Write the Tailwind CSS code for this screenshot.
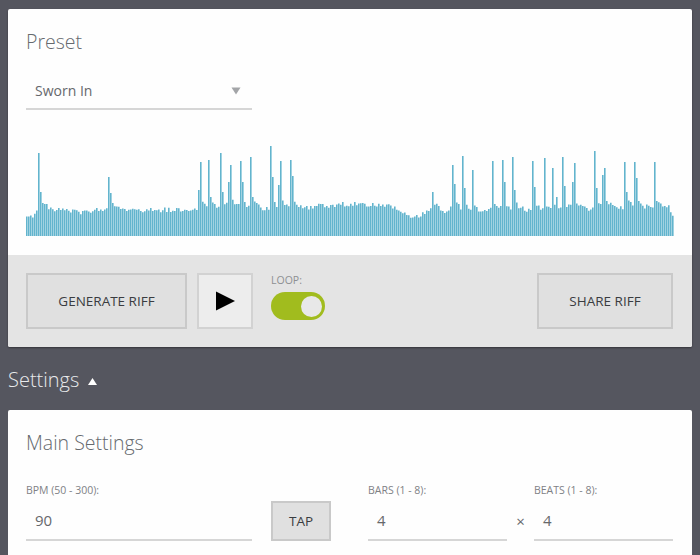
<!doctype html>
<html>
<head>
<meta charset="utf-8">
<script src="https://cdn.jsdelivr.net/npm/@tailwindcss/browser@4"></script>
</head>
<body class="m-0 h-[555px] w-[700px] overflow-hidden bg-[#55565f] font-['Open_Sans',sans-serif]">
<div class="px-2 pt-[9px]">
  <section class="rounded-[2px] bg-[#fefefe] shadow-[0_1px_2px_rgba(0,0,0,0.4)]">
    <div class="px-[18px] pt-[19px] h-[246px]">
      <h2 class="text-[19.5px] leading-[27px] font-light text-[#666a6e]">Preset</h2>
      <div class="mt-[16px] flex h-[39px] w-[226px] items-center justify-between border-b-2 border-[#d6d6d6] pl-[9px] pr-[11px] pt-[2px] text-[14px] text-[#66686c]">
        <span>Sworn In</span>
        <svg width="10" height="8" viewBox="0 0 10 8"><path d="M0.5 0.5H9.5L5 7.5Z" fill="#a3a5a8"/></svg>
      </div>
      <svg id="wave" class="mt-[36px] block" width="648" height="92" viewBox="26 146 648 92"><path id="wp" fill="#62b4cd" d=""/></svg>
    </div>
    <div class="flex h-[92px] items-start rounded-b-[2px] bg-[#e4e4e4] pl-[18px] pr-[19px] pt-[18px]">
      <button class="h-[56px] w-[161px] border-2 border-[#c9c9c9] bg-[#e0e0e0] text-[13.5px] font-normal text-[#3a3c40]">GENERATE RIFF</button>
      <button class="ml-[10px] flex h-[56px] w-[56px] items-center justify-center border-2 border-[#d2d2d2] bg-[#ededed]">
        <svg width="19" height="20" viewBox="0 0 19 20"><path d="M0 0.5L19 10L0 19.5Z" fill="#000"/></svg>
      </button>
      <div class="ml-[18px] flex w-[54px] flex-col">
        <span class="text-[10.5px] leading-[14px] text-[#8d8f92]">LOOP:</span>
        <span class="mt-[5px] flex h-[28px] w-[54px] items-center justify-end rounded-full bg-[#a1bc1e] pr-[3px]">
          <span class="h-[21px] w-[21px] rounded-full bg-[#e8e8e8]"></span>
        </span>
      </div>
      <button class="ml-auto h-[56px] w-[136px] border-2 border-[#c9c9c9] bg-[#e0e0e0] text-[13.5px] font-normal text-[#3a3c40]">SHARE RIFF</button>
    </div>
  </section>
  <div class="mt-[19px] flex h-[28px] items-center gap-[9px] text-[#e9eaec]">
    <span class="text-[20px] leading-[28px] font-light">Settings</span>
    <svg width="9" height="7" viewBox="0 0 9 7" class="mt-[3px]"><path d="M4.5 0L9 7H0Z" fill="#fff"/></svg>
  </div>
  <section class="mt-[16px] h-[160px] rounded-[2px] bg-[#fefefe] px-[18px] pt-[19px]">
    <h2 class="text-[19.5px] leading-[27px] font-light text-[#666a6e]">Main Settings</h2>
    <div class="mt-[27px] flex items-start">
      <div class="w-[226px]">
        <div class="text-[10.5px] leading-[14px] text-[#7f8185]">BPM (50 - 300):</div>
        <div class="flex h-[44px] items-center border-b-2 border-[#d6d6d6] pl-[9px] pt-[4px] text-[15px] text-[#66686c]">90</div>
      </div>
      <button class="ml-[19px] mt-[18px] h-[40px] w-[60px] border-2 border-[#c9c9c9] bg-[#e0e0e0] text-[13.5px] text-[#3a3c40]">TAP</button>
      <div class="ml-[37px] w-[139px]">
        <div class="text-[10.5px] leading-[14px] text-[#7f8185]">BARS (1 - 8):</div>
        <div class="flex h-[44px] items-center border-b-2 border-[#d6d6d6] pl-[9px] pt-[4px] text-[15px] text-[#66686c]">4</div>
      </div>
      <div class="flex h-[76px] w-[27px] items-center justify-center text-[15px] text-[#66686c]">×</div>
      <div class="w-[139px]">
        <div class="text-[10.5px] leading-[14px] text-[#7f8185]">BEATS (1 - 8):</div>
        <div class="flex h-[44px] items-center border-b-2 border-[#d6d6d6] pl-[9px] pt-[4px] text-[15px] text-[#66686c]">4</div>
      </div>
    </div>
  </section>
</div>
<script>
(function(){
  var env=[[26,219],[30,216],[34,214],[37,211],[45,207],[60,210],[80,212],[100,210],[107,206],[115,207],[130,210],[190,210],[197,208],[300,208],[340,204],[385,205],[398,210],[408,216],[420,215],[430,210],[445,211],[452,208],[470,211],[482,213],[490,209],[510,209],[530,211],[600,208],[640,207],[668,207],[673,215]];
  var spikes=[[37,153],[107,177],[199,162],[208,160],[219,153],[230,165],[239,161],[249,157],[269,146],[280,161],[289,160],[431,192],[451,165],[462,156],[471,170],[492,161],[501,160],[512,157],[532,161],[543,158],[552,168],[562,157],[573,163],[593,151],[603,168],[624,162],[633,162],[654,162]];
  var second=[[39,192],[109,193],[197,190],[210,197],[221,192],[228,182],[241,182],[251,197],[271,177],[278,185],[291,176],[453,184],[464,188],[491,192],[503,182],[514,190],[534,187],[555,197],[564,186],[572,182],[595,188],[602,175],[625,192],[635,178],[653,185]];
  var s=1234, d="";
  function r(){s=(s*16807)%2147483647;return s/2147483647;}
  function top(x){for(var i=1;i<env.length;i++){if(x<=env[i][0]){var a=env[i-1],b=env[i];return a[1]+(b[1]-a[1])*(x-a[0])/(b[0]-a[0]);}}return 215;}
  function hit(p,x){var k=p[0]-x;return k>=-1&&k<1;}
  for(var x=26;x<673;x+=2){
    var t=top(x)+(r()-0.5)*5;
    spikes.forEach(function(p){var dx=x-p[0];if(dx>0&&dx<12)t-=(12-dx)*0.6;});
    second.forEach(function(p){if(hit(p,x))t=Math.min(t,p[1]);});
    spikes.forEach(function(p){if(hit(p,x))t=Math.min(t,p[1]);});
    d+="M"+x+" 236V"+t.toFixed(1)+"h1.6V236Z";
  }
  document.getElementById("wp").setAttribute("d",d);
})();
</script>
</body>
</html>
